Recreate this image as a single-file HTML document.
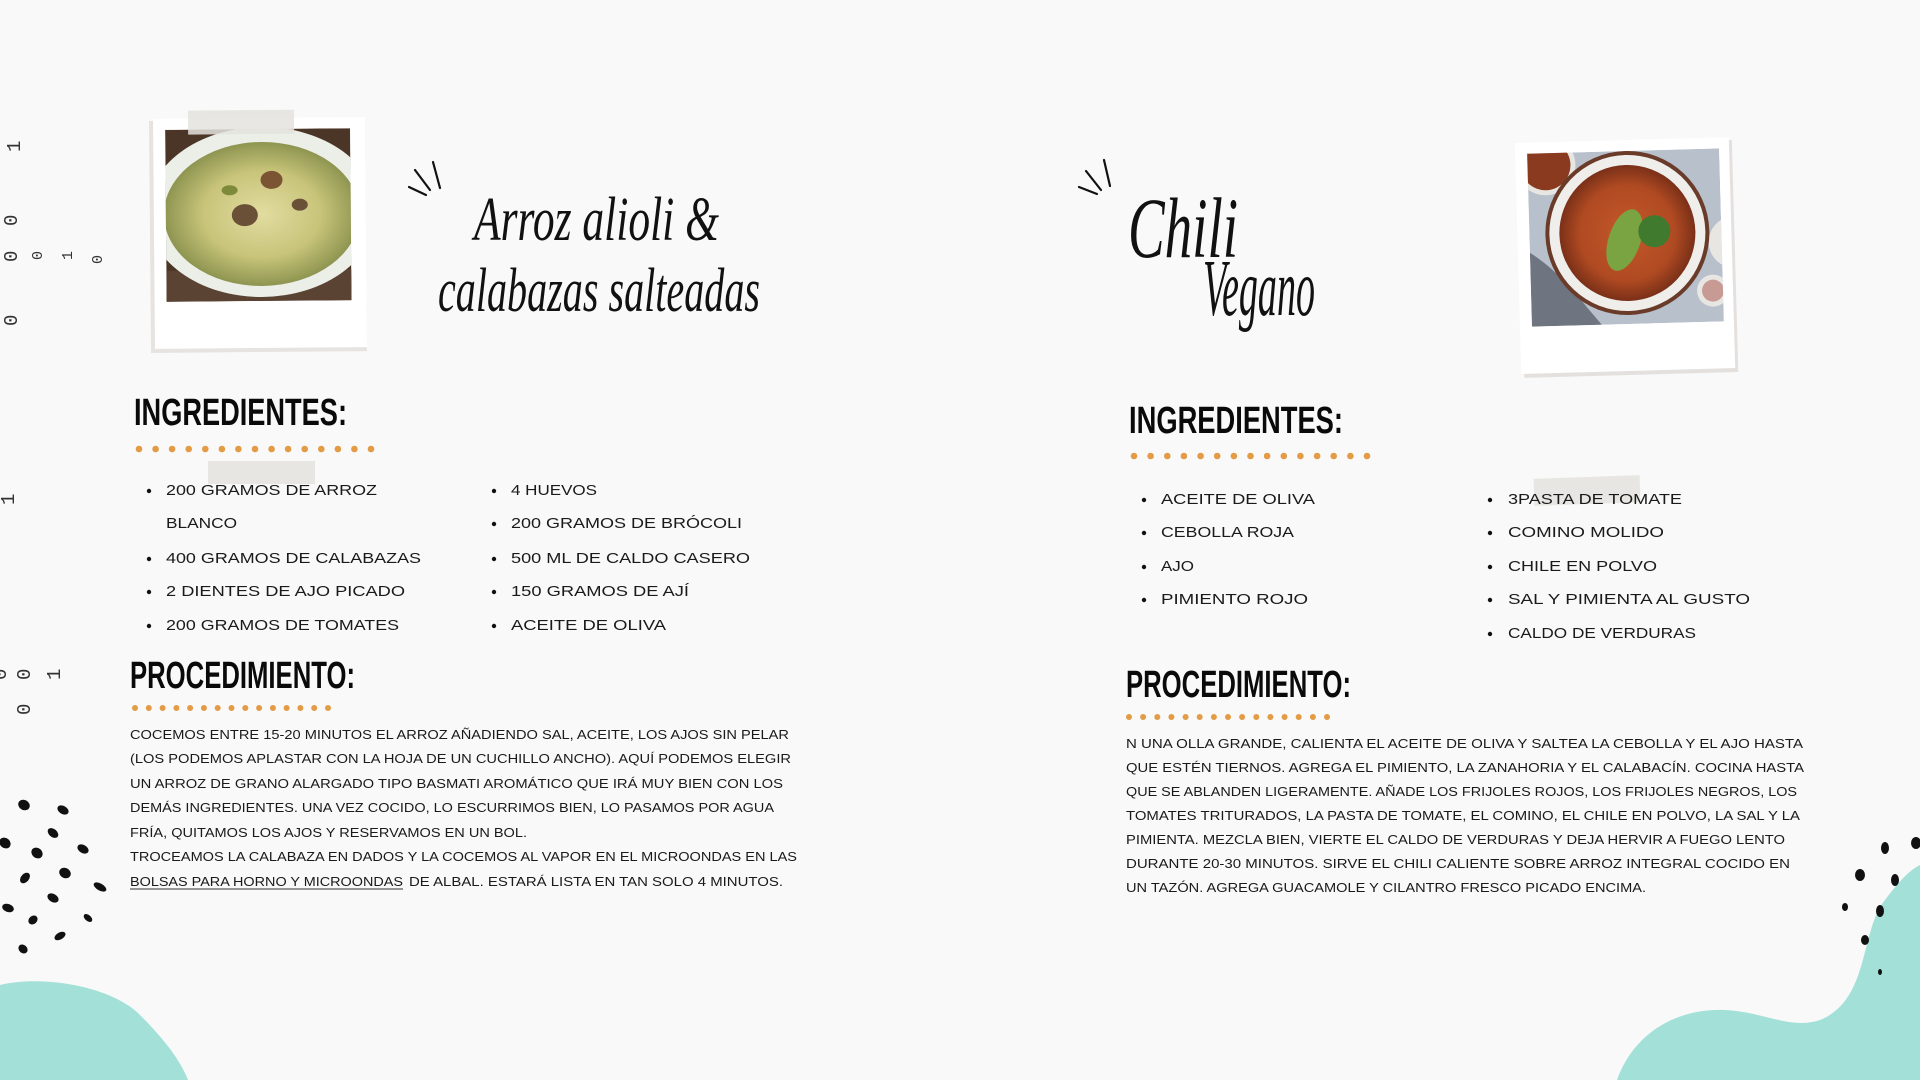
<!DOCTYPE html>
<html><head><meta charset="utf-8"><style>
html,body{margin:0;padding:0;background:#f9f9f9;}
svg{display:block}
.s{font-family:"Liberation Serif",serif;font-style:italic;fill:#111;}
.h{font-family:"Liberation Sans Narrow","Liberation Sans",sans-serif;font-weight:bold;fill:#0a0a0a;}
.l{font-family:"Liberation Sans",sans-serif;font-size:15px;fill:#1a1a1a;}
.p{font-family:"Liberation Sans",sans-serif;font-size:12.5px;fill:#1a1a1a;}
.d{font-family:"Liberation Mono",monospace;font-size:19px;fill:#333;}
</style></head><body>
<svg width="1920" height="1080" viewBox="0 0 1920 1080" xmlns="http://www.w3.org/2000/svg">
<defs>
<radialGradient id="rice" cx="50%" cy="50%" r="50%"><stop offset="0" stop-color="#e2dca0"/><stop offset=".6" stop-color="#c8c47a"/><stop offset="1" stop-color="#8e9550"/></radialGradient>
<radialGradient id="chili" cx="50%" cy="50%" r="50%"><stop offset="0" stop-color="#c4582a"/><stop offset=".7" stop-color="#b04a22"/><stop offset="1" stop-color="#7a3018"/></radialGradient>
<clipPath id="c1"><rect x="166" y="129" width="185" height="172"/></clipPath>
<clipPath id="c2"><rect x="1530" y="151" width="192" height="173"/></clipPath>
</defs>
<rect width="1920" height="1080" fill="#f9f9f9"/>

<path d="M0,985 C40,975 110,985 140,1015 C165,1040 180,1060 188,1080 L0,1080Z" fill="#a3e0d7"/>
<path d="M1617,1080 C1635,1030 1680,1008 1725,1010 C1765,1012 1790,1030 1820,1020 C1870,1000 1860,930 1885,900 C1900,880 1910,870 1920,865 L1920,1080Z" fill="#a3e0d7"/>

<g class="d">
<text transform="translate(20,152) rotate(-90)">1</text>
<text transform="translate(17,226) rotate(-90)">0</text>
<text transform="translate(17,262) rotate(-90)">0</text>
<text transform="translate(42,260) rotate(-90)" font-size="15">0</text>
<text transform="translate(72,260) rotate(-90)" font-size="15">1</text>
<text transform="translate(102,264) rotate(-90)" font-size="15">0</text>
<text transform="translate(17,326) rotate(-90)">0</text>
<text transform="translate(14,505) rotate(-90)">1</text>
<text transform="translate(30,680) rotate(-90)">0</text>
<text transform="translate(60,680) rotate(-90)">1</text>
<text transform="translate(30,715) rotate(-90)">0</text>
<text transform="translate(6,680) rotate(-90)">0</text>
</g>

<g fill="#111">
<ellipse cx="24" cy="805" rx="6" ry="5" transform="rotate(30 24 805)"/><ellipse cx="63" cy="810" rx="6" ry="4" transform="rotate(30 63 810)"/>
<ellipse cx="53" cy="833" rx="6" ry="4" transform="rotate(40 53 833)"/><ellipse cx="5" cy="843" rx="6" ry="5" transform="rotate(40 5 843)"/>
<ellipse cx="37" cy="853" rx="6" ry="5" transform="rotate(40 37 853)"/><ellipse cx="83" cy="849" rx="6" ry="4" transform="rotate(30 83 849)"/>
<ellipse cx="65" cy="873" rx="6" ry="5" transform="rotate(30 65 873)"/><ellipse cx="25" cy="878" rx="6" ry="4" transform="rotate(-50 25 878)"/>
<ellipse cx="100" cy="887" rx="7" ry="3.5" transform="rotate(30 100 887)"/><ellipse cx="53" cy="898" rx="6" ry="4" transform="rotate(30 53 898)"/>
<ellipse cx="8" cy="908" rx="6" ry="4" transform="rotate(20 8 908)"/><ellipse cx="33" cy="920" rx="5" ry="4" transform="rotate(-40 33 920)"/>
<ellipse cx="88" cy="918" rx="5" ry="3" transform="rotate(40 88 918)"/><ellipse cx="60" cy="936" rx="6" ry="3.5" transform="rotate(-30 60 936)"/>
<ellipse cx="23" cy="949" rx="5" ry="4" transform="rotate(40 23 949)"/>
<ellipse cx="1885" cy="848" rx="4" ry="6"/><ellipse cx="1916" cy="843" rx="5" ry="6"/>
<ellipse cx="1860" cy="875" rx="5" ry="6"/><ellipse cx="1895" cy="880" rx="4" ry="6"/>
<ellipse cx="1845" cy="907" rx="3" ry="4"/><ellipse cx="1880" cy="911" rx="4" ry="6"/>
<ellipse cx="1865" cy="940" rx="4" ry="5"/><ellipse cx="1880" cy="972" rx="2" ry="3"/>
</g>

<!-- LEFT polaroid -->
<g transform="rotate(-0.5 260 233)">
<rect x="150" y="120" width="216" height="232" fill="#e6e3e0"/>
<rect x="154" y="118" width="212" height="230" fill="#ffffff"/>
<g clip-path="url(#c1)">
<rect x="166" y="129" width="185" height="172" fill="#4a3526"/>
<rect x="166" y="270" width="185" height="31" fill="#5a4332"/>
<ellipse cx="262" cy="212" rx="115" ry="85" fill="#eceee8"/>
<ellipse cx="262" cy="214" rx="98" ry="72" fill="url(#rice)"/>
<ellipse cx="245" cy="215" rx="13" ry="11" fill="#6b5038"/><ellipse cx="272" cy="180" rx="11" ry="9" fill="#7a5433"/>
<ellipse cx="300" cy="205" rx="8" ry="6" fill="#6b5038"/><ellipse cx="230" cy="190" rx="8" ry="5" fill="#7d8a3a"/>
</g>
<rect x="189" y="110" width="106" height="24" fill="#e4e3de" opacity=".85"/>
</g>

<g stroke="#111" stroke-width="2.2" stroke-linecap="round">
<line x1="409" y1="187" x2="426" y2="195"/><line x1="415" y1="170" x2="430" y2="190"/><line x1="433" y1="162" x2="440" y2="188"/>
</g>
<text class="s" x="474" y="240" font-size="62" textLength="245" lengthAdjust="spacingAndGlyphs">Arroz alioli &amp;</text>
<text class="s" x="438" y="311" font-size="62" textLength="322" lengthAdjust="spacingAndGlyphs">calabazas salteadas</text>

<text class="h" x="134" y="425" font-size="38" textLength="213" lengthAdjust="spacingAndGlyphs">INGREDIENTES:</text>
<g fill="#e39b46">
<circle cx="139" cy="449" r="3.3"/><circle cx="155.6" cy="449" r="3.3"/><circle cx="172.1" cy="449" r="3.3"/><circle cx="188.7" cy="449" r="3.3"/><circle cx="205.3" cy="449" r="3.3"/><circle cx="221.9" cy="449" r="3.3"/><circle cx="238.4" cy="449" r="3.3"/><circle cx="255" cy="449" r="3.3"/><circle cx="271.6" cy="449" r="3.3"/><circle cx="288.1" cy="449" r="3.3"/><circle cx="304.7" cy="449" r="3.3"/><circle cx="321.3" cy="449" r="3.3"/><circle cx="337.9" cy="449" r="3.3"/><circle cx="354.4" cy="449" r="3.3"/><circle cx="371" cy="449" r="3.3"/>
</g>
<rect x="208" y="461" width="107" height="23" fill="#e4e3de" opacity=".85"/>
<g fill="#111"><circle cx="149" cy="491" r="2.2"/><circle cx="149" cy="559" r="2.2"/><circle cx="149" cy="592" r="2.2"/><circle cx="149" cy="626" r="2.2"/>
<circle cx="494" cy="491" r="2.2"/><circle cx="494" cy="524" r="2.2"/><circle cx="494" cy="559" r="2.2"/><circle cx="494" cy="592" r="2.2"/><circle cx="494" cy="626" r="2.2"/></g>
<text class="l" x="166" y="495" textLength="211" lengthAdjust="spacingAndGlyphs">200 GRAMOS DE ARROZ</text>
<text class="l" x="166" y="528" textLength="71" lengthAdjust="spacingAndGlyphs">BLANCO</text>
<text class="l" x="166" y="563" textLength="255" lengthAdjust="spacingAndGlyphs">400 GRAMOS DE CALABAZAS</text>
<text class="l" x="166" y="596" textLength="239" lengthAdjust="spacingAndGlyphs">2 DIENTES DE AJO PICADO</text>
<text class="l" x="166" y="630" textLength="233" lengthAdjust="spacingAndGlyphs">200 GRAMOS DE TOMATES</text>
<text class="l" x="511" y="495" textLength="86" lengthAdjust="spacingAndGlyphs">4 HUEVOS</text>
<text class="l" x="511" y="528" textLength="231" lengthAdjust="spacingAndGlyphs">200 GRAMOS DE BRÓCOLI</text>
<text class="l" x="511" y="563" textLength="239" lengthAdjust="spacingAndGlyphs">500 ML DE CALDO CASERO</text>
<text class="l" x="511" y="596" textLength="178" lengthAdjust="spacingAndGlyphs">150 GRAMOS DE AJÍ</text>
<text class="l" x="511" y="630" textLength="155" lengthAdjust="spacingAndGlyphs">ACEITE DE OLIVA</text>

<text class="h" x="130" y="688" font-size="38" textLength="225" lengthAdjust="spacingAndGlyphs">PROCEDIMIENTO:</text>
<g fill="#e39b46">
<circle cx="135" cy="708" r="3"/><circle cx="148.8" cy="708" r="3"/><circle cx="162.6" cy="708" r="3"/><circle cx="176.4" cy="708" r="3"/><circle cx="190.1" cy="708" r="3"/><circle cx="203.9" cy="708" r="3"/><circle cx="217.7" cy="708" r="3"/><circle cx="231.5" cy="708" r="3"/><circle cx="245.3" cy="708" r="3"/><circle cx="259.1" cy="708" r="3"/><circle cx="272.9" cy="708" r="3"/><circle cx="286.6" cy="708" r="3"/><circle cx="300.4" cy="708" r="3"/><circle cx="314.2" cy="708" r="3"/><circle cx="328" cy="708" r="3"/>
</g>
<g class="p">
<text x="130" y="739" textLength="659" lengthAdjust="spacingAndGlyphs">COCEMOS ENTRE 15-20 MINUTOS EL ARROZ AÑADIENDO SAL, ACEITE, LOS AJOS SIN PELAR</text>
<text x="130" y="763" textLength="661" lengthAdjust="spacingAndGlyphs">(LOS PODEMOS APLASTAR CON LA HOJA DE UN CUCHILLO ANCHO). AQUÍ PODEMOS ELEGIR</text>
<text x="130" y="788" textLength="653" lengthAdjust="spacingAndGlyphs">UN ARROZ DE GRANO ALARGADO TIPO BASMATI AROMÁTICO QUE IRÁ MUY BIEN CON LOS</text>
<text x="130" y="812" textLength="644" lengthAdjust="spacingAndGlyphs">DEMÁS INGREDIENTES. UNA VEZ COCIDO, LO ESCURRIMOS BIEN, LO PASAMOS POR AGUA</text>
<text x="130" y="837" textLength="397" lengthAdjust="spacingAndGlyphs">FRÍA, QUITAMOS LOS AJOS Y RESERVAMOS EN UN BOL.</text>
<text x="130" y="861" textLength="667" lengthAdjust="spacingAndGlyphs">TROCEAMOS LA CALABAZA EN DADOS Y LA COCEMOS AL VAPOR EN EL MICROONDAS EN LAS</text>
<text x="130" y="886" textLength="273" lengthAdjust="spacingAndGlyphs">BOLSAS PARA HORNO Y MICROONDAS</text>
<text x="409" y="886" textLength="374" lengthAdjust="spacingAndGlyphs">DE ALBAL. ESTARÁ LISTA EN TAN SOLO 4 MINUTOS.</text>
</g>
<line x1="130" y1="889" x2="403" y2="889" stroke="#333" stroke-width="1"/>

<g stroke="#111" stroke-width="2.2" stroke-linecap="round">
<line x1="1079" y1="187" x2="1097" y2="194"/><line x1="1086" y1="171" x2="1101" y2="190"/><line x1="1104" y1="160" x2="1110" y2="186"/>
</g>
<text class="s" x="1128" y="257" font-size="86" textLength="110" lengthAdjust="spacingAndGlyphs">Chili</text>
<text class="s" x="1203" y="315" font-size="80" textLength="112" lengthAdjust="spacingAndGlyphs">Vegano</text>

<!-- RIGHT polaroid -->
<g transform="rotate(-1.6 1627 255)">
<rect x="1521" y="143" width="214" height="232" fill="#e4e0de"/>
<rect x="1518" y="140" width="214" height="231" fill="#ffffff"/>
<g clip-path="url(#c2)">
<rect x="1530" y="151" width="192" height="173" fill="#b7c0cb"/>
<circle cx="1548" cy="163" r="30" fill="#e8e6e3"/><circle cx="1548" cy="163" r="25" fill="#8a3a1e"/>
<circle cx="1735" cy="245" r="26" fill="#e8e6e3"/><circle cx="1712" cy="293" r="16" fill="#e8e6e3"/><circle cx="1712" cy="293" r="11" fill="#c89a94"/>
<path d="M1530,250 C1560,270 1580,300 1600,324 L1530,324Z" fill="#6e7480"/>
<circle cx="1628" cy="233" r="82" fill="#6b3b2a"/><circle cx="1628" cy="233" r="78" fill="#efeeea"/>
<circle cx="1628" cy="233" r="68" fill="url(#chili)"/>
<ellipse cx="1625" cy="240" rx="16" ry="32" fill="#7aa342" transform="rotate(20 1625 240)"/>
<circle cx="1655" cy="232" r="16" fill="#3f7a2e"/>
</g>
</g>

<text class="h" x="1129" y="433" font-size="38" textLength="214" lengthAdjust="spacingAndGlyphs">INGREDIENTES:</text>
<g fill="#e39b46">
<circle cx="1134" cy="456" r="3.3"/><circle cx="1150.6" cy="456" r="3.3"/><circle cx="1167.3" cy="456" r="3.3"/><circle cx="1183.9" cy="456" r="3.3"/><circle cx="1200.6" cy="456" r="3.3"/><circle cx="1217.2" cy="456" r="3.3"/><circle cx="1233.9" cy="456" r="3.3"/><circle cx="1250.5" cy="456" r="3.3"/><circle cx="1267.1" cy="456" r="3.3"/><circle cx="1283.8" cy="456" r="3.3"/><circle cx="1300.4" cy="456" r="3.3"/><circle cx="1317.1" cy="456" r="3.3"/><circle cx="1333.7" cy="456" r="3.3"/><circle cx="1350.4" cy="456" r="3.3"/><circle cx="1367" cy="456" r="3.3"/>
</g>
<rect x="1534" y="477" width="106" height="27" fill="#e4e3de" opacity=".85" transform="rotate(-2 1587 490)"/>
<g fill="#111"><circle cx="1144" cy="500" r="2.2"/><circle cx="1144" cy="533" r="2.2"/><circle cx="1144" cy="567" r="2.2"/><circle cx="1144" cy="600" r="2.2"/>
<circle cx="1490" cy="500" r="2.2"/><circle cx="1490" cy="533" r="2.2"/><circle cx="1490" cy="567" r="2.2"/><circle cx="1490" cy="600" r="2.2"/><circle cx="1490" cy="634" r="2.2"/></g>
<text class="l" x="1161" y="504" textLength="154" lengthAdjust="spacingAndGlyphs">ACEITE DE OLIVA</text>
<text class="l" x="1161" y="537" textLength="133" lengthAdjust="spacingAndGlyphs">CEBOLLA ROJA</text>
<text class="l" x="1161" y="571" textLength="33" lengthAdjust="spacingAndGlyphs">AJO</text>
<text class="l" x="1161" y="604" textLength="147" lengthAdjust="spacingAndGlyphs">PIMIENTO ROJO</text>
<text class="l" x="1508" y="504" textLength="174" lengthAdjust="spacingAndGlyphs">3PASTA DE TOMATE</text>
<text class="l" x="1508" y="537" textLength="156" lengthAdjust="spacingAndGlyphs">COMINO MOLIDO</text>
<text class="l" x="1508" y="571" textLength="149" lengthAdjust="spacingAndGlyphs">CHILE EN POLVO</text>
<text class="l" x="1508" y="604" textLength="242" lengthAdjust="spacingAndGlyphs">SAL Y PIMIENTA AL GUSTO</text>
<text class="l" x="1508" y="638" textLength="188" lengthAdjust="spacingAndGlyphs">CALDO DE VERDURAS</text>

<text class="h" x="1126" y="697" font-size="38" textLength="225" lengthAdjust="spacingAndGlyphs">PROCEDIMIENTO:</text>
<g fill="#e39b46">
<circle cx="1129" cy="717" r="3"/><circle cx="1143.1" cy="717" r="3"/><circle cx="1157.3" cy="717" r="3"/><circle cx="1171.4" cy="717" r="3"/><circle cx="1185.6" cy="717" r="3"/><circle cx="1199.7" cy="717" r="3"/><circle cx="1213.9" cy="717" r="3"/><circle cx="1228" cy="717" r="3"/><circle cx="1242.1" cy="717" r="3"/><circle cx="1256.3" cy="717" r="3"/><circle cx="1270.4" cy="717" r="3"/><circle cx="1284.6" cy="717" r="3"/><circle cx="1298.7" cy="717" r="3"/><circle cx="1312.9" cy="717" r="3"/><circle cx="1327" cy="717" r="3"/>
</g>
<g class="p">
<text x="1126" y="748" textLength="677" lengthAdjust="spacingAndGlyphs">N UNA OLLA GRANDE, CALIENTA EL ACEITE DE OLIVA Y SALTEA LA CEBOLLA Y EL AJO HASTA</text>
<text x="1126" y="772" textLength="678" lengthAdjust="spacingAndGlyphs">QUE ESTÉN TIERNOS. AGREGA EL PIMIENTO, LA ZANAHORIA Y EL CALABACÍN. COCINA HASTA</text>
<text x="1126" y="796" textLength="671" lengthAdjust="spacingAndGlyphs">QUE SE ABLANDEN LIGERAMENTE. AÑADE LOS FRIJOLES ROJOS, LOS FRIJOLES NEGROS, LOS</text>
<text x="1126" y="820" textLength="674" lengthAdjust="spacingAndGlyphs">TOMATES TRITURADOS, LA PASTA DE TOMATE, EL COMINO, EL CHILE EN POLVO, LA SAL Y LA</text>
<text x="1126" y="844" textLength="659" lengthAdjust="spacingAndGlyphs">PIMIENTA. MEZCLA BIEN, VIERTE EL CALDO DE VERDURAS Y DEJA HERVIR A FUEGO LENTO</text>
<text x="1126" y="868" textLength="664" lengthAdjust="spacingAndGlyphs">DURANTE 20-30 MINUTOS.  SIRVE EL CHILI CALIENTE SOBRE ARROZ INTEGRAL COCIDO EN</text>
<text x="1126" y="892" textLength="520" lengthAdjust="spacingAndGlyphs">UN TAZÓN. AGREGA GUACAMOLE Y CILANTRO FRESCO PICADO ENCIMA.</text>
</g>
</svg>
</body></html>
